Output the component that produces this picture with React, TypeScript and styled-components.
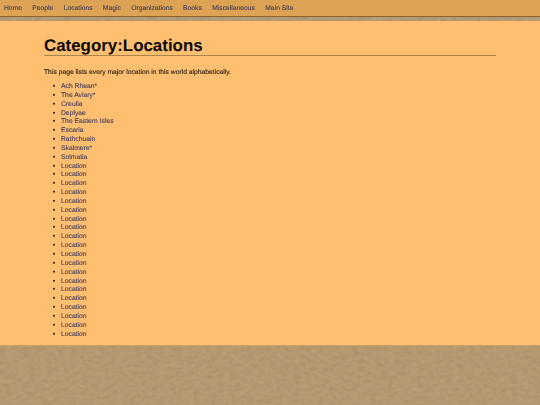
import React from "react";
import styled, { createGlobalStyle } from "styled-components";

const texture = `url("data:image/svg+xml,${encodeURIComponent(
  `<svg xmlns='http://www.w3.org/2000/svg' width='540' height='405'><filter id='n' x='0' y='0' width='100%' height='100%'><feTurbulence type='fractalNoise' baseFrequency='0.17 0.25' numOctaves='5' seed='11'/><feColorMatrix values='0 0 0 0 0.36 0 0 0 0 0.26 0 0 0 0 0.14 1.2 0 0 0 -0.42'/></filter><rect width='540' height='405' fill='#b69c73'/><rect width='540' height='405' filter='url(#n)'/></svg>`
)}")`;

const Global = createGlobalStyle`
  html, body { margin: 0; padding: 0; }
  body {
    width: 540px;
    height: 405px;
    overflow: hidden;
    background-color: #b2976c;
    background-image: ${texture};
    font-family: "Liberation Sans", Arial, sans-serif;
    text-rendering: geometricPrecision;
  }
`;

const Nav = styled.nav`
  display: flex;
  gap: 10.3px;
  height: 16px;
  padding-left: 4px;
  align-items: center;
  background: #dda253;
  border-bottom: 1px solid #8a6531;
  font-size: 6.75px;
`;

const NavLink = styled.a`
  color: #4a4456;
  text-decoration: none;
  white-space: nowrap;
  -webkit-text-stroke: 0.12px currentColor;
  filter: blur(0.28px);
`;

const Page = styled.main`
  margin-top: 4px;
  height: 325px;
  box-sizing: border-box;
  padding: 16px 44px 0;
  background: #ffbf71;
  border-bottom: 1px solid #c9a066;
`;

const Title = styled.h1`
  margin: 0;
  height: 18px;
  font-size: 16.9px;
  line-height: 18px;
  font-weight: 700;
  color: #0c0904;
  border-bottom: 1px solid #a9834a;
`;

const Intro = styled.p`
  margin: 11.6px 0 6.4px;
  font-size: 6.75px;
  line-height: 9px;
  color: #2c2216;
  -webkit-text-stroke: 0.12px currentColor;
  filter: blur(0.28px);
`;

const List = styled.ul`
  margin: 0;
  padding: 0 0 0 17px;
  list-style: none;
  font-size: 6.75px;
  line-height: 8.85px;
  color: #1a1208;
  -webkit-text-stroke: 0.12px currentColor;
  filter: blur(0.28px);
`;

const Item = styled.li`
  &::before {
    content: "•";
    display: inline-block;
    width: 8px;
    margin-left: -8.3px;
    margin-right: 0.3px;
    color: #0c0904;
    -webkit-text-stroke: 0;
  }
`;

const ItemLink = styled.a`
  color: #453f60;
  text-decoration: none;
`;

const Mark = styled.span`
  color: #5f5355;
`;

const navItems = ["Home", "People", "Locations", "Magic", "Organizations", "Books", "Miscellaneous", "Main Site"];
const named = [
  ["Ach Rhean", true],
  ["The Aviary", true],
  ["Creulia", false],
  ["Deplyae", false],
  ["The Eastern Isles", false],
  ["Escaria", false],
  ["Rathchuain", false],
  ["Skalmere", true],
  ["Solmatia", false],
] as const;
const items: ReadonlyArray<readonly [string, boolean]> = [
  ...named,
  ...Array.from({ length: 20 }, () => ["Location", false] as const),
];

export default function App() {
  return (
    <>
      <Global />
      <Nav>
        {navItems.map((n) => (
          <NavLink key={n} href="#">{n}</NavLink>
        ))}
      </Nav>
      <Page>
        <Title>Category:Locations</Title>
        <Intro>This page lists every major location in this world alphabetically.</Intro>
        <List>
          {items.map(([name, star], i) => (
            <Item key={i}>
              <ItemLink href="#">{name}</ItemLink>
              {star && <Mark>*</Mark>}
            </Item>
          ))}
        </List>
      </Page>
    </>
  );
}
